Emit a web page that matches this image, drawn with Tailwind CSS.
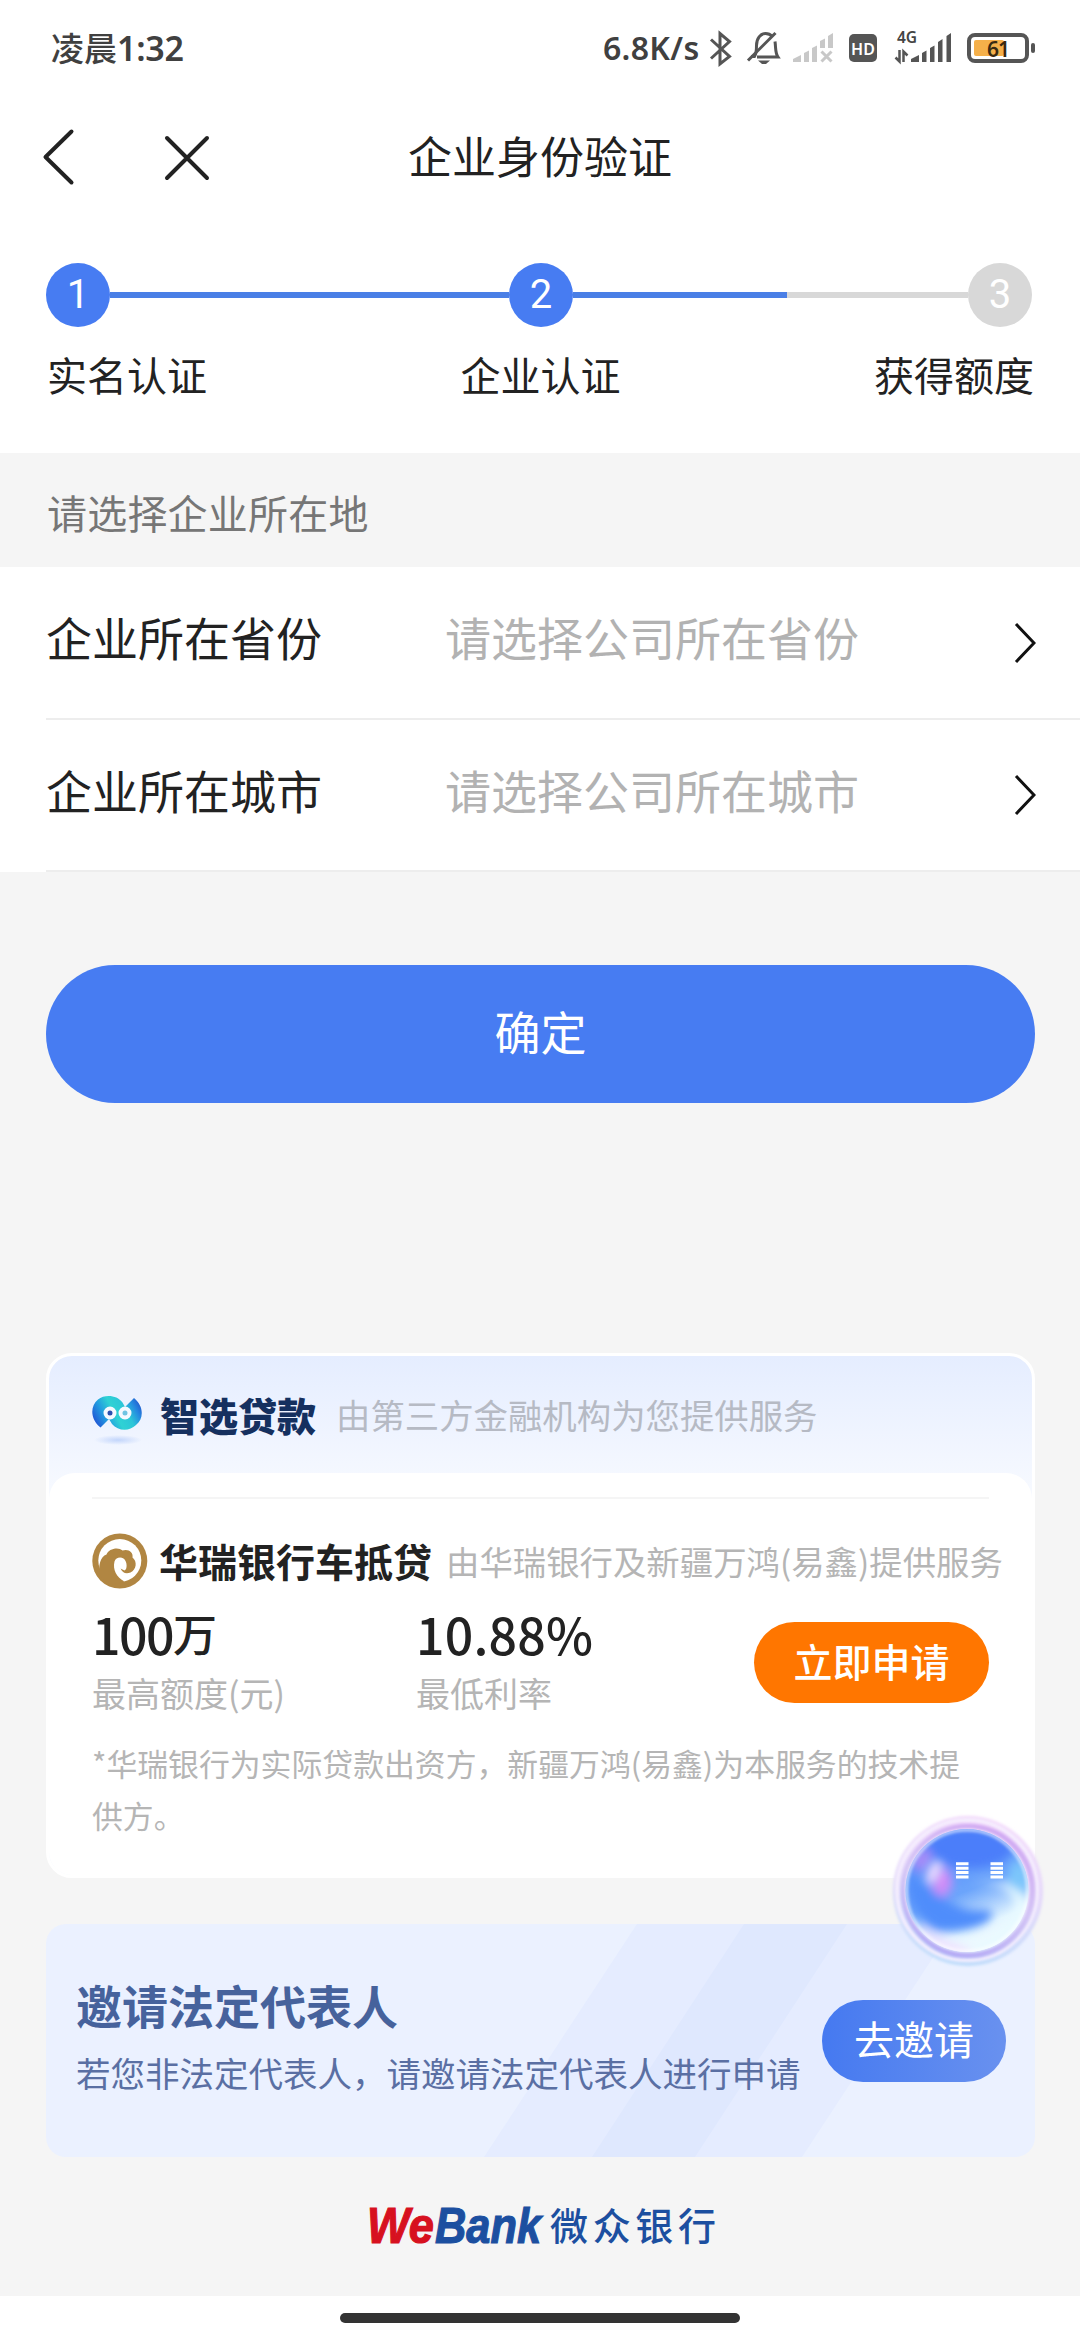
<!DOCTYPE html>
<html lang="zh-CN">
<head>
<meta charset="utf-8">
<title>企业身份验证</title>
<script src="https://cdn.jsdelivr.net/npm/@tailwindcss/browser@4"></script>
</head>
<body class="w-[1080px] h-[2340px] overflow-hidden bg-[#f5f5f5] font-['Noto_Sans_CJK_SC',sans-serif] text-[#222] leading-none whitespace-nowrap">
<div class="relative flex flex-col w-[1080px] h-[2340px]">

  <header class="bg-white">
    <!-- status bar -->
    <div class="flex items-center h-[98px] pl-[51px] pr-[45px] text-[#404040] font-medium">
      <span class="flex items-center h-[95px] self-start text-[33px]">凌晨<span class="font-['Noto_Sans'] font-semibold text-[34px] tracking-[-0.3px]">1:32</span></span>
      <span class="ml-auto flex items-center h-[95px] self-start w-[102px] font-['Noto_Sans'] text-[32px] tracking-[0.3px] font-semibold">6.8K/s</span>
      <svg width="330" height="98" viewBox="705 0 330 98" fill="none">
        <path d="M711 39.500L729.500 56.500L720 64V33.500L729.500 41.500L711 58.500" stroke="#555" stroke-width="3"/>
        <path d="M751 56.500h3.500c2-3 2-6 2-11c0-7 4-12 9-12c3 0 5 1 7 3M775 41.500c1 7 0 11 3 15.500H757" stroke="#555" stroke-width="3"/>
        <path d="M748 60.500L775.500 33" stroke="#555" stroke-width="3"/>
        <path d="M758 60.500h12l-4 3.500h-4z" fill="#555"/>
        <g fill="#c8c8c8">
          <path d="M793 62v-3l8-4v7zM804 62V53l5-2.500V62zM812 62V48l5-2.500V62zM820 48V41l5-2.500V48zM828 48V36l5-3V48z"/>
          <path d="M821.500 51.500L831.500 61.500M831.500 51.500L821.500 61.500" stroke="#c8c8c8" stroke-width="3"/>
        </g>
        <rect x="849" y="34" width="28" height="28" rx="5" fill="#555"/>
        <text x="863" y="54.500" text-anchor="middle" font-size="16" font-weight="600" font-family="Noto Sans" fill="#fff">HD</text>
        <text x="897" y="43" font-size="15.500" font-weight="600" font-family="Noto Sans" fill="#444">4G</text>
        <path d="M899.500 50v11.500l-4-4M903.500 62V51.500l4 4" stroke="#555" stroke-width="2.500"/>
        <path d="M911 62v-3l8-4v7zM922 62V53l4.500-2.500V62zM930 62V48l4.500-2.500V62zM938 62V42l4.500-3V62zM946.500 62V36l4.500-3V62z" fill="#555"/>
        <rect x="969" y="35" width="58" height="26" rx="6" stroke="#555" stroke-width="4" fill="#fff"/>
        <rect x="974" y="40" width="30" height="16" rx="2" fill="#f5b04a"/>
        <rect x="1031" y="43" width="4" height="10" rx="2" fill="#555"/>
        <text x="987" y="56.500" font-size="21" font-weight="600" font-family="Noto Sans" fill="#3a2a10" textLength="23">61</text>
      </svg>
    </div>
    <!-- navigation -->
    <div class="flex items-center h-[119px]">
      <svg width="230" height="119" viewBox="0 98 230 119" fill="none" stroke="#222" stroke-width="4" stroke-linecap="round" stroke-linejoin="round">
        <path d="M71.500 131.500L45.500 157L71.500 182.500M167 138L207 178M207 138L167 178"/>
      </svg>
      <h1 class="w-[620px] text-center text-[44px] pb-[5px]">企业身份验证</h1>
    </div>
    <!-- steps -->
    <div class="h-[236px] pt-[46px] px-[46px] text-[40px]">
      <div class="flex items-center text-white pr-[2px]">
        <span class="flex items-center justify-center size-16 rounded-full bg-[#477cf2] font-['Roboto']">1</span>
        <span class="h-[6px] flex-1 bg-[#4a7fe6]"></span>
        <span class="flex items-center justify-center size-16 rounded-full bg-[#477cf2] font-['Roboto']">2</span>
        <span class="h-[6px] w-[214px] bg-[#4a7fe6]"></span>
        <span class="h-[6px] w-[181px] bg-[#d8d8d8]"></span>
        <span class="flex items-center justify-center size-16 rounded-full bg-[#d8d8d8] font-['Roboto']">3</span>
      </div>
      <div class="flex justify-between mt-[27px] pl-[1px]">
        <span>实名认证</span><span>企业认证</span><span>获得额度</span>
      </div>
    </div>
  </header>

  <h2 class="flex items-center h-[114px] pl-[47px] pt-[4px] text-[40px] tracking-[0.2px] text-[#767676]">请选择企业所在地</h2>

  <section class="bg-white text-[46px]">
    <div class="flex h-[153px] pl-[46px]">
      <div class="flex flex-1 items-center border-b-2 border-[#ededed] pr-[44px]">
        <span class="w-[399px] pb-[13px]">企业所在省份</span>
        <span class="text-[#b2b2b2] pb-[13px]">请选择公司所在省份</span>
        <svg class="ml-auto" width="22" height="42" fill="none" stroke="#111" stroke-width="3"><path d="M2 2L20 21L2 40"/></svg>
      </div>
    </div>
    <div class="flex h-[152px] pl-[46px]">
      <div class="flex flex-1 items-center border-b-2 border-[#ededed] pr-[44px]">
        <span class="w-[399px] pb-[13px]">企业所在城市</span>
        <span class="text-[#b2b2b2] pb-[13px]">请选择公司所在城市</span>
        <svg class="ml-auto" width="22" height="42" fill="none" stroke="#111" stroke-width="3"><path d="M2 2L20 21L2 40"/></svg>
      </div>
    </div>
  </section>

  <button class="mx-[46px] w-[989px] mt-[93px] h-[138px] pb-[8px] rounded-full bg-[#477cf2] text-white text-[46px] flex items-center justify-center">确定</button>

  <!-- recommended loan -->
  <section class="mx-[46px] w-[989px] mt-[250px] h-[525px] rounded-[26px] border-[3px] border-white bg-gradient-to-b from-[#e5edff] to-[#f6f9ff] to-[130px] flex flex-col overflow-hidden">
    <div class="flex items-center h-[117px] pl-[42px]">
      <svg class="shrink-0" width="54" height="60" viewBox="11 5 54 60">
        <defs>
          <linearGradient id="la" gradientUnits="userSpaceOnUse" x1="14" y1="46" x2="62" y2="20"><stop offset="0" stop-color="#2148d2"/><stop offset="0.250" stop-color="#229ae0"/><stop offset="0.450" stop-color="#2fd2d4"/><stop offset="0.650" stop-color="#2cc6d8"/><stop offset="0.820" stop-color="#2589e0"/><stop offset="1" stop-color="#2148c8"/></linearGradient>
          <radialGradient id="ls"><stop offset="0" stop-color="#c2d5fb"/><stop offset="1" stop-color="#c2d5fb" stop-opacity="0"/></radialGradient>
        </defs>
        <ellipse cx="38" cy="60" rx="24" ry="5" fill="url(#ls)"/>
        <path d="M20.500 47.500C10 39 10 26 18 19.500C25 14 37 15 42.500 22.500L45 27L54 18C64 26 64 39 56 45C49 52 38 51 32 44L29 39Z" fill="url(#la)"/>
        <circle cx="30" cy="33" r="4.500" fill="#2b4fae" stroke="#f4f9ff" stroke-width="4"/>
        <circle cx="45" cy="33" r="4.500" fill="#6fc4e2" stroke="#f4f9ff" stroke-width="4"/>
      </svg>
      <span class="ml-[15px] text-[39px] font-black text-[#15305f]">智选贷款</span>
      <span class="ml-[20px] text-[34.400px] text-[#b6bac4]">由第三方金融机构为您提供服务</span>
    </div>
    <div class="flex-1 rounded-t-[26px] bg-white px-[43px]">
      <div class="h-[26px] border-b-2 border-[#f5f5f5]"></div>
      <div class="flex items-center mt-[33px] h-[58px]">
        <svg class="shrink-0" width="56" height="56" viewBox="11.500 13.500 56 56">
          <circle cx="39.300" cy="41.500" r="27.500" fill="#b18642"/>
          <circle cx="39.300" cy="41" r="21.500" fill="#fff"/>
          <path d="M20 57C17 46 20 37 26 35C28 29 38 27 42 31C48 29 53 33 52 38C57 42 56 50 50 53C45 55 42 53 40 49L44 51C47 50 47 42 43 39C40 37 35 38 34 42C32 50 36 58 44 62L30 66Z" fill="#b18642"/>
        </svg>
        <span class="ml-[11px] text-[39px] font-bold pb-[2px]">华瑞银行车抵贷</span>
        <span class="ml-[14px] text-[33.400px] text-[#b5b5b5] pb-[1px]">由华瑞银行及新疆万鸿(易鑫)提供服务</span>
      </div>
      <div class="flex mt-[12px] h-[117px]">
        <div class="w-[324px]">
          <div class="text-[50px] h-[62px] font-medium flex items-center tracking-[-1.5px]">100<span class="text-[44px]">万</span></div>
          <div class="text-[34px] mt-[12px] text-[#b5b5b5]">最高额度(元)</div>
        </div>
        <div class="flex-1">
          <div class="text-[50px] h-[62px] font-medium flex items-center tracking-[0.200px]">10.88%</div>
          <div class="text-[34px] mt-[12px] text-[#b5b5b5]">最低利率</div>
        </div>
        <button class="mt-[20px] w-[235px] h-[81px] pb-[5px] rounded-full bg-[#ff7600] text-white text-[39px] font-medium flex items-center justify-center">立即申请</button>
      </div>
      <p class="mt-[18px] leading-[52px] text-[30.850px] text-[#b5b5b5]">*华瑞银行为实际贷款出资方，新疆万鸿(易鑫)为本服务的技术提<br>供方。</p>
    </div>
  </section>

  <!-- invitation -->
  <section class="relative mx-[46px] w-[989px] mt-[46px] h-[233px] rounded-[20px] overflow-hidden bg-[#ebf1ff] flex items-center pl-[30px] pr-[29px]">
    <svg class="absolute inset-0" width="989" height="233">
      <path d="M591 0H909L756 233H438Z" fill="#e5ecff"/><path d="M698 0H801L649 233H546Z" fill="#dfe8fe"/>
    </svg>
    <div class="relative text-[#46629c] pb-[10px]">
      <div class="text-[46px] font-bold">邀请法定代表人</div>
      <div class="text-[34.500px] mt-[28px] text-[#5a6fa3]">若您非法定代表人，请邀请法定代表人进行申请</div>
    </div>
    <button class="relative ml-auto w-[184px] h-[82px] pb-[5px] rounded-full bg-gradient-to-r from-[#4579f0] to-[#6991ef] text-white text-[40px] flex items-center justify-center">去邀请</button>
  </section>

  <div class="flex items-center h-[139px] pl-[350px]">
    <svg width="400" height="80" viewBox="350 2187 400 80">
      <g font-family="Liberation Sans" font-weight="700" font-style="italic" font-size="50" stroke-width="1.200">
        <text x="367" y="2243" fill="#d7111f" stroke="#d7111f" textLength="67" lengthAdjust="spacingAndGlyphs">We</text>
        <text x="435" y="2243" fill="#1c4fa0" stroke="#1c4fa0" textLength="106" lengthAdjust="spacingAndGlyphs">Bank</text>
      </g>
      <text x="550" y="2239.500" font-family="Noto Sans CJK SC" font-weight="500" font-size="38" fill="#1c4fa0" textLength="166">微众银行</text>
    </svg>
  </div>

  <footer class="flex-1 bg-white flex justify-center pt-[17px]"><div class="w-[400px] h-[10px] rounded-full bg-[#333]"></div></footer>

  <!-- assistant bubble -->
  <svg class="absolute left-[880px] top-[1800px]" width="180" height="180" viewBox="0 0 180 180">
    <defs>
      <linearGradient id="halo" x1="0.600" y1="0" x2="0.400" y2="1"><stop offset="0" stop-color="#f3d8fb"/><stop offset="0.500" stop-color="#e2d8fa"/><stop offset="1" stop-color="#bcdcfb"/></linearGradient>
      <linearGradient id="rim" x1="0.700" y1="0" x2="0.300" y2="1"><stop offset="0" stop-color="#cfa6f2"/><stop offset="0.500" stop-color="#d3c4f5"/><stop offset="1" stop-color="#b3a8f5"/></linearGradient>
      <linearGradient id="core" x1="0.300" y1="0" x2="0.700" y2="1"><stop offset="0" stop-color="#4f86fb"/><stop offset="0.500" stop-color="#6ba4fb"/><stop offset="0.750" stop-color="#e4f6ff"/><stop offset="1" stop-color="#fff"/></linearGradient>
      <filter id="b1" x="-30%" y="-30%" width="160%" height="160%"><feGaussianBlur stdDeviation="1.500"/></filter>
      <filter id="b5" x="-60%" y="-60%" width="220%" height="220%"><feGaussianBlur stdDeviation="5"/></filter>
      <clipPath id="disc"><circle cx="87" cy="90.500" r="61.500"/></clipPath>
    </defs>
    <circle cx="88" cy="91" r="75" fill="url(#halo)" filter="url(#b1)"/>
    <circle cx="87" cy="90" r="70" fill="none" stroke="#f6effe" stroke-width="4" filter="url(#b1)"/>
    <circle cx="88" cy="91" r="64" fill="none" stroke="url(#rim)" stroke-width="6" filter="url(#b1)"/>
    <g clip-path="url(#disc)">
      <rect x="20" y="20" width="140" height="140" fill="url(#core)"/>
      <g filter="url(#b5)">
        <ellipse cx="90" cy="48" rx="42" ry="20" fill="#4b7efa"/>
        <ellipse cx="138" cy="82" rx="10" ry="22" fill="#7cc6fb"/>
        <path d="M76 94C96 76 128 82 134 100C140 122 110 146 72 148L110 156L150 130L146 98C126 76 96 78 76 94Z" fill="#e8faff"/>
        <path d="M28 74C40 78 60 100 84 108C96 112 108 108 112 112C114 124 84 134 56 130C36 118 26 96 28 74Z" fill="#4f8dfb"/>
        <ellipse cx="42" cy="60" rx="8" ry="12" fill="#a98cf8" transform="rotate(30 42 60)"/>
        <ellipse cx="62" cy="82" rx="10" ry="14" fill="#cf8df8"/>
        <path d="M38 126Q66 142 96 152L76 156L40 138Z" fill="#f0e0ff"/>
      </g>
      <ellipse cx="54" cy="72" rx="6" ry="13" fill="#ecdcff" filter="url(#b5)" transform="rotate(25 54 72)"/>
    </g>
    <circle cx="87" cy="90.500" r="60.500" fill="none" stroke="#fff" stroke-opacity="0.650" stroke-width="3" filter="url(#b1)"/>
    <path d="M76 63.800h12.500M76 68.200h12.500M76 72.600h12.500M76 77h12.500M110.500 63.800h12.500M110.500 68.200h12.500M110.500 72.600h12.500M110.500 77h12.500" stroke="#fff" stroke-width="3"/>
  </svg>
</div>
</body>
</html>
